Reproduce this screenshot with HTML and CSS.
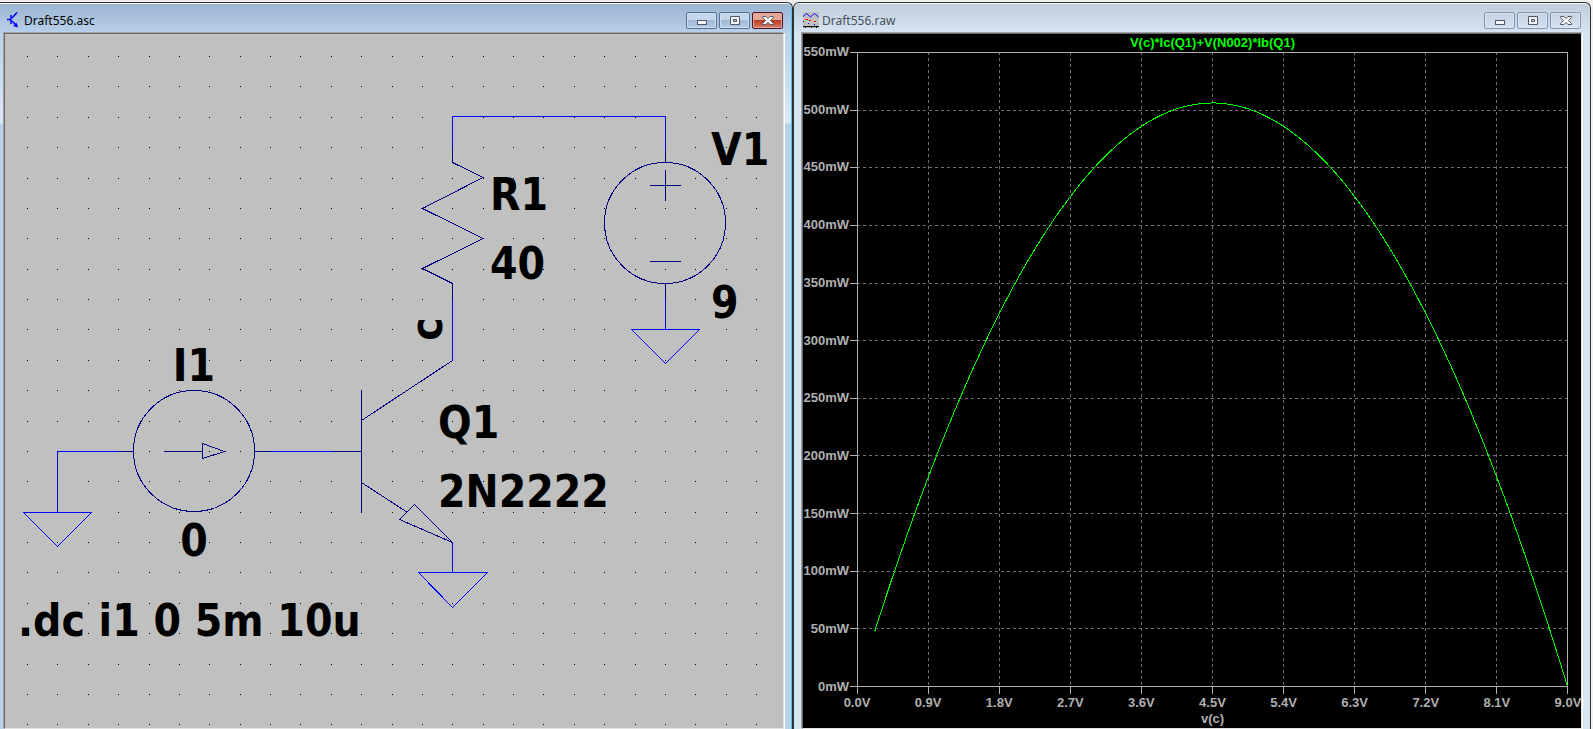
FILE: index.html
```
<!DOCTYPE html>
<html lang="en">
<head>
  <meta charset="UTF-8" />
  <meta name="viewport" content="width=device-width, initial-scale=1.0"/>
  <title>Draft556</title>
  <link rel="stylesheet" href="styles.css">
</head>
<body>
  <div class="desktop">

    <section class="window active">
      <header class="titlebar">
        <svg class="icon" width="16" height="16" viewBox="0 0 16 16" aria-hidden="true">
          <path d="M2 7.500h4M6 3v9M7 6l5-5.500M7 9l5 5" stroke="#0000ff" stroke-width="1.500" fill="none"/>
          <path d="M13 15.500l-5-1.500 3.500-3.500z" fill="#0000ff"/>
        </svg>
        <h2>Draft556.asc</h2>
        <button class="btn" aria-label="Minimize"><svg width="12" height="12"><rect class="glyph" x="1.500" y="6.500" width="9" height="4"/></svg></button>
        <button class="btn" aria-label="Maximize"><svg width="12" height="12"><path class="glyph" fill-rule="evenodd" d="M1.500 2.500h9v8h-9zM4.500 5.500h3v2h-3z"/></svg></button>
        <button class="btn close" aria-label="Close"><svg width="12" height="12"><path class="glyph" d="M.5 2.500h3.500l2 2 2-2h3.500v1l-3 3 3 3v1H8l-2-2-2 2H.5v-1l3-3-3-3z"/></svg></button>
      </header>
      <div class="client">
        <svg class="schematic" role="img" aria-label="Common emitter schematic">
          <g id="grid"></g>
          <!-- wires and grounds -->
          <g class="wire">
            <path d="M447.500 114.500V82.500H660.500V114.500"/>
            <path d="M447.500 265.500V326.500"/>
            <path d="M660.500 265.500V295.500M626.500 295.500H694.500L660.500 329.500Z"/>
            <path d="M113.500 417.500H52.500V478.500M18.500 478.500H86.500L52.500 512.500Z"/>
            <path d="M265.500 417.500H327.500"/>
            <path d="M447.500 508.500V538.500M413.500 538.500H482.500L447.500 573.500Z"/>
          </g>
          <!-- parts -->
          <g class="part">
            <path d="M447.500 114.500V128.500L478 143.500L417.500 174.500L478 204.500L417.500 234.500L447.500 249.500V265.500"/>
            <circle cx="660" cy="189" r="60.500"/>
            <path d="M660.500 114.500V128.500M660.500 249.500V265.500M645 151.500H676M660.500 136V167M645 227.500H676"/>
            <circle cx="189" cy="417" r="60.500"/>
            <path d="M113.500 417.500H129M249.500 417.500H265.500M159 417.500H197.500M197.500 409.500V424.500L219.500 417.500Z"/>
            <path d="M327.500 417.500H356.500M356.500 356V479M356.500 386.500L447.500 326.500M356.500 448.500L402.500 478.500M409.500 470.500L394.500 485.500L447.500 508.500Z"/>
          </g>
          <g class="label">
            <text x="485" y="176">R1</text>
            <text x="485" y="245">40</text>
            <text x="706" y="131">V1</text>
            <text x="706" y="284">9</text>
            <text class="mid" x="189" y="347">I1</text>
            <text class="mid" x="189" y="522">0</text>
            <text x="433" y="404">Q1</text>
            <text x="433" y="473">2N2222</text>
            <text x="13" y="602">.dc i1 0 5m 10u</text>
            <text class="mid" transform="translate(437 295) rotate(-90)">c</text>
          </g>
        </svg>
      </div>
    </section>

    <section class="window">
      <header class="titlebar">
        <svg class="icon" width="16" height="16" viewBox="0 0 16 16" aria-hidden="true">
          <rect width="16" height="16" fill="#c0c0c0"/>
          <path d="M0 4.500l3.500-3 4 3.500 4-3.500 4 3.500" stroke="#0000ff" fill="none"/>
          <path d="M2 7h3v1H2zM6 8h2v1H6zM11 9h2v1h-2z" fill="#ff0000"/>
          <path d="M5 11h1v1H5zM11 12h1v1h-1z" fill="#0000ff"/>
          <path d="M0 14h16v1H0zM0 9h1v1H0zM2 15h1v1H2zM8 15h1v1H8zM13 15h1v1h-1z"/>
        </svg>
        <h2>Draft556.raw</h2>
        <button class="btn" aria-label="Minimize"><svg width="12" height="12"><rect class="glyph" x="1.500" y="6.500" width="9" height="4"/></svg></button>
        <button class="btn" aria-label="Maximize"><svg width="12" height="12"><path class="glyph" fill-rule="evenodd" d="M1.500 2.500h9v8h-9zM4.500 5.500h3v2h-3z"/></svg></button>
        <button class="btn" aria-label="Close"><svg width="12" height="12"><path class="glyph" d="M.5 2.500h3.500l2 2 2-2h3.500v1l-3 3 3 3v1H8l-2-2-2 2H.5v-1l3-3-3-3z"/></svg></button>
      </header>
      <div class="client plot">
        <div class="trace-name">V(c)*Ic(Q1)+V(N002)*Ib(Q1)</div>
        <div class="y-axis" id="y-axis"></div>
        <svg class="graph" id="graph" viewBox="0 0 711 635" preserveAspectRatio="none" role="img" aria-label="Power against v(c)"></svg>
        <div class="x-axis">
          <div class="x-ticks" id="x-axis"></div>
          <div class="x-name">v(c)</div>
        </div>
      </div>
    </section>

  </div>

<script>
// schematic grid dots
const step = 30.38;
let dots = '';
for (let r = 0; r < 40; r++) {
  for (let c = 0; c < 60; c++) {
    dots += `M${Math.round(22 + c * step)} ${Math.round(22 + r * step)}h1v1h-1z`;
  }
}
document.getElementById('grid').innerHTML = `<path d="${dots}"/>`;

// plot: 0..9V in 0.9V steps, 0..550mW in 50mW steps
const W = 710, H = 634;
const px = v => v / 9 * W + 0.5;
const py = p => H - p / 550 * H + 0.5;
let lines = '', ticks = '', xLabels = '', yLabels = '';

for (let i = 0; i <= 10; i++) {
  const x = Math.floor(px(i * 0.9)) + 0.5;
  if (i > 0 && i < 10) lines += `M${x} 0V${H}`;
  ticks += `M${x} ${H}v8`;
  xLabels += `<span>${(i * 0.9).toFixed(1)}V</span>`;
}
for (let p = 550; p >= 0; p -= 50) {
  const y = Math.floor(py(p)) + 0.5;
  if (p > 0 && p < 550) lines += `M0 ${y}H${W}`;
  ticks += `M0 ${y}h-7`;
  yLabels += `<span>${p}mW</span>`;
}

// load line: P = v * (9 - v) / 40
let curve = '';
for (let v = 0.22; v < 9.005; v += 0.0878) {
  curve += `${curve ? 'L' : 'M'}${px(v).toFixed(1)} ${py(v * (9 - v) * 25).toFixed(1)}`;
}

document.getElementById('graph').innerHTML =
  `<path class="gridline" d="${lines}"/>
   <path class="frame" d="M.5 .5H${W}.5V${H}.5H.5Z${ticks}"/>
   <path class="trace" d="${curve}"/>`;
document.getElementById('x-axis').innerHTML = xLabels;
document.getElementById('y-axis').innerHTML = yLabels;
</script>
</body>
</html>
```
FILE: styles.css
```
* { box-sizing: border-box; }
body {
  margin: 0;
  background: #f0f0f0;
  font-family: "Liberation Sans", Arial, sans-serif;
}
.desktop {
  display: grid;
  grid-template-columns: 793fr 798fr;
  height: 100vh;
  padding: 2px 2px 0 0;
  overflow: hidden;
}
.window {
  display: flex;
  flex-direction: column;
  min-width: 0;
  padding: 0 7px 0 8px;
  border: 1px solid #303030;
  border-bottom: 0;
  border-radius: 6px 6px 0 0;
  background: linear-gradient(#bfcddb, #d7e4f2 30px);
  box-shadow: inset 0 1px #f4f8fc;
}
.window.active {
  padding: 0 7px 0 3px;
  border-left: 0;
  border-radius: 0 6px 0 0;
  background: linear-gradient(#99b4d1, #b9d1ea 30px, #dce8f6 120px, #b9d1ea 121px);
  box-shadow: inset 0 1px #f4f8fc, inset -1px 0 #4cc4e8;
}

/* title bar */
.titlebar {
  display: flex;
  align-items: center;
  gap: 2px;
  height: 29px;
  padding: 5px 2px 0 0;
  flex: none;
}
.icon { margin: 0 1px; }
.active .icon { margin-left: 2px; }
.titlebar h2 {
  flex: 1;
  margin: 0;
  font: 12px "Noto Sans", "Open Sans", sans-serif;
  color: #45505c;
}
.active .titlebar h2 { color: #000; }
.btn {
  display: flex;
  align-items: center;
  justify-content: center;
  width: 31px;
  height: 17px;
  padding: 0;
  border: 1px solid #8495b3;
  border-radius: 2px;
  background: linear-gradient(#c5d3e2, #d4e1ef);
  box-shadow: inset 0 0 0 1px #d8e4f1;
}
.active .btn {
  border-color: #566f92;
  background: linear-gradient(#c3d6ea 50%, #9fb9d6 50%, #b5cde6);
  box-shadow: inset 0 0 0 1px #cfdff0;
}
.active .close {
  border-color: #4c1321;
  background: linear-gradient(#e6a79b 50%, #bc3a22 50%, #d4826c);
  box-shadow: inset 0 0 0 1px #e2a79c;
}
.glyph {
  fill: #f4f4f4;
  stroke: #535666;
}

/* sunken client area */
.client {
  flex: 1;
  min-height: 0;
  border: 1px solid #696969;
  border-right-color: #e3e3e3;
  border-bottom-color: #e3e3e3;
  box-shadow: -1px -1px #a0a0a0, 1px 0 #fff;
  margin: 1px 1px 0 0;
  background: #c0c0c0;
}
.active .client { margin-left: 1px; }

.schematic {
  display: block;
  width: 100%;
  height: 100%;
  shape-rendering: crispEdges;
}
.wire, .part { fill: none; }
.wire { stroke: #0000ff; }
.part { stroke: #000080; }
.label {
  font-family: "DejaVu Sans Condensed", "DejaVu Sans", sans-serif;
  font-size: 44px;
  font-weight: bold;
}
.mid { text-anchor: middle; }

/* waveform */
.plot {
  display: grid;
  grid-template-columns: 54px 1fr 13px;
  grid-template-rows: 18px 1fr 41px;
  background: #000;
  color: #b0b0b0;
  font-size: 13px;
  font-weight: bold;
}
.trace-name {
  grid-column: 2;
  line-height: 18px;
  text-align: center;
  color: #00ff00;
}
.y-axis {
  grid-column: 1;
  display: flex;
  flex-direction: column;
  justify-content: space-between;
  padding-right: 8px;
  text-align: right;
}
.y-axis span {
  height: 0;
  line-height: 0;
}
.graph {
  width: 100%;
  height: 100%;
  overflow: visible;
  fill: none;
  shape-rendering: crispEdges;
}
.graph path { vector-effect: non-scaling-stroke; }
.frame { stroke: #b0b0b0; }
.gridline {
  stroke: #707070;
  stroke-dasharray: 3 3;
}
.trace { stroke: #00ff00; }
.x-axis {
  grid-column: 2;
  padding-top: 8px;
  line-height: 16px;
  text-align: center;
}
.x-ticks {
  display: flex;
  justify-content: space-between;
}
.x-ticks span {
  display: flex;
  justify-content: center;
  width: 0;
}
```
